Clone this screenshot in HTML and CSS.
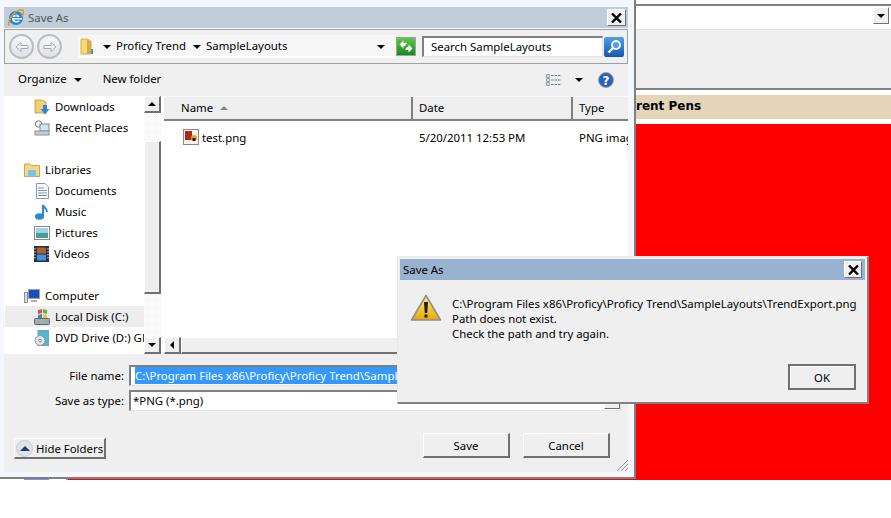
FILE: index.html

```html
<!DOCTYPE html>
<html lang="en">
<head>
  <meta charset="UTF-8">
  <title>Save As</title>
  <link rel="stylesheet" href="styles.css">
</head>
<body>
  <div class="desktop">

    <!-- app behind the dialogs -->
    <div class="app">
      <div class="app-select"><span class="select-btn"><i class="tri"></i></span></div>
      <div class="app-panel"></div>
      <div class="pens-title"><span>rent Pens</span></div>
      <div class="pens-body"></div>
    </div>

    <!-- file dialog -->
    <div class="file-dialog">
      <div class="titlebar file-title">
        <svg class="ie-icon" width="16" height="17" viewBox="0 0 16 17">
          <circle cx="8" cy="9" r="7" fill="#1f86dc"/>
          <path d="M1 16.500 C0 13 2 9 5 5.500 C8 2.500 12.500 0 15 1.200 C16.500 2.500 15.500 5 13.500 7.500" fill="none" stroke="#e8960f" stroke-width="1.600"/>
          <path d="M4.500 8 C5 4.500 11 4.500 11.500 8 Z" fill="#fff"/>
          <path d="M6.300 7.500 C6.800 6 9.300 6 9.700 7.500 Z" fill="#1f86dc"/>
          <rect x="4" y="9" width="10" height="1.500" fill="#fff"/>
          <path d="M4 10.500 C4.500 14 9.500 14.500 12 12 L10 11.500 C8.500 12.500 6.800 12 6.300 10.500 Z" fill="#fff"/>
        </svg>
        <span class="title-text">Save As</span>
        <span class="close-btn">
          <svg width="11" height="10" viewBox="0 0 11 10"><path d="M1 0.500 L10 9.500 M10 0.500 L1 9.500" stroke="#000" stroke-width="2.400"/></svg>
        </span>
      </div>

      <div class="navbar">
        <div class="nav-buttons">
          <span class="round-btn">
            <svg width="14" height="12" viewBox="0 0 14 12"><path d="M1 6 L6 1.500 V4.500 H13 V7.500 H6 V10.500 Z" fill="#f2f3f4" stroke="#a4a8ac"/></svg>
          </span>
          <span class="round-btn">
            <svg width="14" height="12" viewBox="0 0 14 12"><path d="M13 6 L8 1.500 V4.500 H1 V7.500 H8 V10.500 Z" fill="#f2f3f4" stroke="#a4a8ac"/></svg>
          </span>
        </div>
        <div class="address">
          <svg class="addr-folder" width="14" height="17" viewBox="0 0 14 17">
            <path d="M1 1 H7 L11 3 V16 H1 Z" fill="#f6d978" stroke="#c9a63e" stroke-width=".8"/>
            <path d="M7 2 L11 3.500 V16 H7 Z" fill="#dca93c"/>
            <rect x="11" y="11" width="2" height="5" fill="#3f93dc"/>
          </svg>
          <i class="tri addr-tri1"></i>
          <span class="crumb">Proficy Trend</span>
          <i class="tri addr-tri2"></i>
          <span class="crumb">SampleLayouts</span>
          <i class="tri addr-tri3"></i>
        </div>
        <span class="refresh-btn">
          <svg width="14" height="13" viewBox="0 0 14 13">
            <path d="M0.500 4.500 L4.500 0.500 V3 H8 L6 6 H4.500 V8.500 Z M13.500 8.500 L9.500 12.500 V10 H6 L8 7 H9.500 V4.500 Z" fill="#fff"/>
          </svg>
        </span>
        <div class="search-box">Search SampleLayouts</div>
        <span class="search-btn">
          <svg width="15" height="15" viewBox="0 0 15 15">
            <circle cx="9" cy="6" r="4" fill="#5a9fdc" stroke="#fff" stroke-width="1.800"/>
            <path d="M6 9 L1.500 13.500" stroke="#fff" stroke-width="2.400"/>
          </svg>
        </span>
      </div>

      <div class="toolbar">
        <span class="tool-label">Organize</span>
        <i class="tri organize-tri"></i>
        <span class="tool-label">New folder</span>
        <span class="toolbar-right">
          <svg width="16" height="12" viewBox="0 0 16 12">
            <path d="M0.500 0.500 H3.500 V3.500 H0.500 Z M0.500 4.500 H3.500 V7.500 H0.500 Z M0.500 8.500 H3.500 V11.500 H0.500 Z" fill="#fff" stroke="#8fa4bd"/>
            <path d="M1.500 2 H2.500 M1.500 6 H2.500 M1.500 10 H2.500" stroke="#d0452c"/>
            <path d="M5 1.500 H15 M5 6 H15 M5 10.500 H15" stroke="#67788e" stroke-width="1.200" stroke-dasharray="2.500 1"/>
          </svg>
          <i class="tri view-tri"></i>
          <svg class="help-icon" width="16" height="16" viewBox="0 0 16 16">
            <circle cx="8" cy="8" r="7.500" fill="#2f5fb5" stroke="#9aa3ad"/>
            <text x="8" y="12.500" text-anchor="middle" class="help-mark">?</text>
          </svg>
        </span>
      </div>

      <div class="browser">
        <div class="nav-pane">
          <ul class="tree">
            <li class="tree-row sub">
              <svg width="16" height="16" viewBox="0 0 16 16"><path d="M1 1 H8 L12 3 V14 H1 Z" fill="#f0cf6e" stroke="#b8963c" stroke-width=".8"/><path d="M9 6 H13 V10 H15.500 L11 15.500 L6.500 10 H9 Z" fill="#2f86d8"/></svg>
              <span>Downloads</span>
            </li>
            <li class="tree-row sub">
              <svg width="16" height="16" viewBox="0 0 16 16"><circle cx="4.500" cy="4" r="3.200" fill="#f4f4f4" stroke="#777"/><rect x="6" y="4" width="9" height="7" fill="#cfe3f2" stroke="#7d8a96"/><rect x="1" y="11" width="14" height="4" fill="#c8ccd0" stroke="#8d9298"/></svg>
              <span>Recent Places</span>
            </li>
            <li class="tree-row gap"></li>
            <li class="tree-row top">
              <svg width="16" height="15" viewBox="0 0 16 15"><path d="M0.500 2 H6 L7.500 3.500 H15.500 V14.500 H0.500 Z" fill="#f3d888" stroke="#c9a650"/><path d="M4 8 H12 V14.500 H4 Z" fill="#7fc1e6"/></svg>
              <span>Libraries</span>
            </li>
            <li class="tree-row sub">
              <svg width="16" height="16" viewBox="0 0 16 16"><path d="M2.500 0.500 H11 L14.500 4 V15.500 H2.500 Z" fill="#fff" stroke="#8b98a8"/><path d="M4 5 H10 M4 7.500 H13 M4 10 H13 M4 12.500 H13" stroke="#6e8fc2"/></svg>
              <span>Documents</span>
            </li>
            <li class="tree-row sub">
              <svg width="16" height="16" viewBox="0 0 16 16"><ellipse cx="5.500" cy="12.500" rx="4.500" ry="3.300" fill="#2b88d8"/><path d="M9 12 V1 C10 4 13 4 13 8" fill="none" stroke="#2b88d8" stroke-width="2"/></svg>
              <span>Music</span>
            </li>
            <li class="tree-row sub">
              <svg width="16" height="14" viewBox="0 0 16 14"><rect x="0.500" y="0.500" width="15" height="13" fill="#fff" stroke="#7e8a96"/><rect x="2" y="2" width="12" height="5" fill="#9fd0ea"/><rect x="2" y="7" width="12" height="5" fill="#4e9a8e"/></svg>
              <span>Pictures</span>
            </li>
            <li class="tree-row sub">
              <svg width="15" height="16" viewBox="0 0 15 16"><rect width="15" height="16" fill="#26323e"/><rect x="3" y="1.500" width="9" height="6" fill="#b5612f"/><rect x="3" y="8.500" width="9" height="6" fill="#3f93dc"/><path d="M1 2 V14 M14 2 V14" stroke="#d8dde2" stroke-dasharray="1.500 1.500"/></svg>
              <span>Videos</span>
            </li>
            <li class="tree-row gap"></li>
            <li class="tree-row top">
              <svg width="16" height="14" viewBox="0 0 16 14"><rect x="4.500" y="0.500" width="11" height="9" fill="#1e4fb8" stroke="#9aa4ae"/><rect x="0.500" y="3.500" width="3" height="10" fill="#d8dcdf" stroke="#8b9096"/><rect x="7" y="11" width="6" height="2" fill="#a9afb5"/></svg>
              <span>Computer</span>
            </li>
            <li class="tree-row sub selected">
              <svg width="16" height="16" viewBox="0 0 16 16"><path d="M4 1 L8 0 V4 L4 5 Z" fill="#e2502a"/><path d="M9 0 L13 1 V5 L9 4 Z" fill="#62b24a"/><path d="M4 6 L8 5 V9 H4 Z" fill="#2f86d8"/><path d="M9 5 L13 6 V9 H9 Z" fill="#f2c030"/><rect x="0.500" y="9.500" width="15" height="6" rx="1" fill="#a4abb2" stroke="#5c646c"/><rect x="11" y="12" width="3" height="1" fill="#5fd04a"/></svg>
              <span>Local Disk (C:)</span>
            </li>
            <li class="tree-row sub">
              <svg width="16" height="16" viewBox="0 0 16 16"><rect x="4" y="0.500" width="10.500" height="15" fill="#4fb8cf" stroke="#6ca8b8"/><circle cx="6" cy="10.500" r="5" fill="#dfe3e8" stroke="#8d949c"/><circle cx="6" cy="10.500" r="1.300" fill="#fff" stroke="#8d949c"/></svg>
              <span>DVD Drive (D:) GF</span>
            </li>
          </ul>
        </div>

        <div class="v-scroll">
          <span class="scroll-btn"><i class="tri-up"></i></span>
          <span class="scroll-track small"></span>
          <span class="scroll-thumb"></span>
          <span class="scroll-track"></span>
          <span class="scroll-btn"><i class="tri"></i></span>
        </div>

        <div class="file-pane">
          <div class="col-heads">
            <div class="col col-name">Name <i class="sort-arrow"></i></div>
            <div class="col col-date">Date</div>
            <div class="col col-type">Type</div>
          </div>
          <div class="file-rows">
            <div class="file-row">
              <div class="col-name file-name">
                <svg width="16" height="16" viewBox="0 0 16 16"><rect x="0.500" y="0.500" width="15" height="15" fill="#f4f4f4" stroke="#8a8a8a"/><rect x="2" y="2" width="7" height="9" fill="#b02a18"/><circle cx="11" cy="9" r="3" fill="#e8a020"/><rect x="9.500" y="9" width="3" height="3" fill="#2a1a10"/></svg>
                <span>test.png</span>
              </div>
              <div class="col-date">5/20/2011 12:53 PM</div>
              <div class="col-type">PNG imag</div>
            </div>
          </div>
          <div class="h-scroll">
            <span class="scroll-btn"><i class="tri-left"></i></span>
            <span class="h-thumb"></span>
          </div>
        </div>
      </div>

      <div class="form">
        <div class="form-row name-row">
          <label>File name:</label>
          <div class="field"><span class="picked">C:\Program Files x86\Proficy\Proficy Trend\SampleLayouts\TrendExport.png</span></div>
        </div>
        <div class="form-row type-row">
          <label>Save as type:</label>
          <div class="field type-field">*PNG (*.png)<span class="select-btn"><i class="tri"></i></span></div>
        </div>
      </div>

      <div class="footer">
        <span class="hide-btn">
          <span class="hide-dot"><i class="tri-up navy"></i></span>
          <span>Hide Folders</span>
        </span>
        <span class="footer-actions">
          <span class="btn">Save</span>
          <span class="btn">Cancel</span>
        </span>
        <svg class="grip" width="11" height="11" viewBox="0 0 11 11">
          <path d="M0 11 L11 0 M4 11 L11 4 M8 11 L11 8" stroke="#9a9a9a"/>
        </svg>
      </div>
    </div>

    <!-- error box -->
    <div class="alert">
      <div class="titlebar alert-title">
        <span class="title-text">Save As</span>
        <span class="close-btn">
          <svg width="11" height="10" viewBox="0 0 11 10"><path d="M1 0.500 L10 9.500 M10 0.500 L1 9.500" stroke="#000" stroke-width="2.400"/></svg>
        </span>
      </div>
      <div class="alert-body">
        <svg class="warn-icon" width="32" height="28" viewBox="0 0 32 28">
          <defs>
            <linearGradient id="warnFill" x1="0" y1="0" x2="0" y2="1">
              <stop offset="0" stop-color="#fff27a"/>
              <stop offset="1" stop-color="#e8a800"/>
            </linearGradient>
          </defs>
          <path d="M16 1.500 L30.500 26 H1.500 Z" fill="url(#warnFill)" stroke="#8c8f94" stroke-width="1.600" stroke-linejoin="round"/>
          <path d="M14 8 H18 L17.200 19 H14.800 Z" fill="#1a1a1a"/>
          <rect x="14.500" y="20.500" width="3" height="3" fill="#1a1a1a"/>
        </svg>
        <div class="alert-msg">
          <p>C:\Program Files x86\Proficy\Proficy Trend\SampleLayouts\TrendExport.png</p>
          <p>Path does not exist.</p>
          <p>Check the path and try again.</p>
        </div>
      </div>
      <div class="alert-foot"><span class="btn ok-btn">OK</span></div>
    </div>

    <div class="bottom-scrap"></div>
  </div>
</body>
</html>
```

FILE: styles.css

```css
* {
  box-sizing: border-box;
}
html, body {
  margin: 0;
  padding: 0;
  background: #fff;
}
body {
  font-family: "Noto Sans", sans-serif;
  font-size: 11.4px;
  color: #000;
}
ul {
  list-style: none;
  margin: 0;
  padding: 0;
}
svg {
  display: block;
  flex: none;
}
.desktop {
  position: relative;
  width: 891px;
  height: 518px;
  overflow: hidden;
  background: #fff;
}

/* little triangles */
.tri {
  display: block;
  width: 0;
  height: 0;
  border-left: 4px solid transparent;
  border-right: 4px solid transparent;
  border-top: 4px solid #000;
}
.tri-up {
  display: block;
  width: 0;
  height: 0;
  border-left: 4px solid transparent;
  border-right: 4px solid transparent;
  border-bottom: 4px solid #000;
}
.tri-up.navy {
  border-bottom-color: #1f3a78;
  border-left-width: 5px;
  border-right-width: 5px;
  border-bottom-width: 5px;
}
.tri-left {
  display: block;
  width: 0;
  height: 0;
  border-top: 4px solid transparent;
  border-bottom: 4px solid transparent;
  border-right: 4px solid #000;
}

/* app behind */
.app {
  position: absolute;
  left: 635px;
  top: 0;
  width: 256px;
  height: 480px;
  display: flex;
  flex-direction: column;
  background: #fff;
}
.app-select {
  height: 26px;
  margin-top: 4px;
  border-top: 2px solid #808080;
  border-bottom: 1px solid #e3e3e3;
  background: #fff;
  display: flex;
  justify-content: flex-end;
  padding: 1px 2px 0 0;
}
.select-btn {
  width: 16px;
  height: 17px;
  background: #efefef;
  border: 1px solid #fff;
  border-right-color: #707070;
  border-bottom-color: #707070;
  display: flex;
  align-items: center;
  justify-content: center;
}
.app-panel {
  height: 60px;
  background: #efefef;
  border-bottom: 2px solid #808080;
}
.pens-title {
  height: 24px;
  margin-top: 5px;
  padding-left: 1px;
  background: #e3d4ba;
  font-family: "DejaVu Sans", sans-serif;
  font-weight: bold;
  font-size: 12px;
  line-height: 23px;
}
.pens-body {
  flex: 1;
  margin-top: 5px;
  background: #f00;
}

/* windows */
.titlebar {
  display: flex;
  align-items: center;
}
.title-text {
  flex: 1;
}
.close-btn {
  width: 19px;
  height: 17px;
  background: #efefef;
  border: 1px solid #fff;
  border-right-color: #707070;
  border-bottom-color: #707070;
  display: flex;
  align-items: center;
  justify-content: center;
}

.file-dialog {
  position: absolute;
  left: 0;
  top: 0;
  width: 636px;
  height: 479px;
  padding: 7px 6px 5px 4px;
  background: #f4f7fd;
  border-right: 2px solid #808080;
  border-bottom: 2px solid #808080;
  display: flex;
  flex-direction: column;
}
.file-title {
  height: 21px;
  flex: none;
  background: #bfcddb;
  padding: 0 2px 0 4px;
  gap: 4px;
  color: #555;
}

.navbar {
  height: 35px;
  flex: none;
  margin-top: 1px;
  border: 1px solid #a0a0a0;
  background: #f0f0f0;
  display: flex;
  align-items: center;
  padding-left: 4px;
}
.nav-buttons {
  display: flex;
  gap: 3px;
  width: 69px;
}
.round-btn {
  width: 25px;
  height: 25px;
  border-radius: 50%;
  border: 2px solid #b9bcc0;
  background: linear-gradient(#f6f7f8, #dfe1e3);
  display: flex;
  align-items: center;
  justify-content: center;
}
.address {
  width: 317px;
  height: 23px;
  background: linear-gradient(#f7f7f7, #f7f7f7 21px, #fff 21px);
  display: flex;
  align-items: center;
}
.crumb {
  margin-top: -2px;
}
.addr-folder {
  margin-left: 2px;
}
.addr-tri1 {
  margin-left: 9px;
  margin-right: 5px;
}
.addr-tri2 {
  margin-left: 7px;
  margin-right: 5px;
}
.addr-tri3 {
  margin-left: auto;
  margin-right: 10px;
}
.refresh-btn {
  width: 20px;
  height: 19px;
  margin-left: 1px;
  background: linear-gradient(#5fc84a, #1a8a1e);
  border: 1px solid #9aa4a0;
  display: flex;
  align-items: center;
  justify-content: center;
}
.search-box {
  width: 181px;
  height: 21px;
  margin-left: 6px;
  background: #fff;
  border: 1px solid #e3e3e3;
  border-top: 2px solid #808080;
  border-left: 2px solid #808080;
  padding-left: 7px;
  line-height: 17px;
}
.search-btn {
  width: 20px;
  height: 20px;
  margin-left: 1px;
  border-radius: 2px;
  background: linear-gradient(#4f9fe6, #1458b0);
  display: flex;
  align-items: center;
  justify-content: center;
}

.toolbar {
  height: 32px;
  flex: none;
  background: #f0f0f0;
  display: flex;
  align-items: center;
  padding: 0 14px 0 14px;
}
.tool-label {
  margin-top: -3px;
}
.organize-tri {
  margin: -1px 21px 0 7px;
}
.toolbar-right {
  margin-left: auto;
  display: flex;
  align-items: center;
}
.view-tri {
  margin: 0 15px 0 13px;
}
.help-mark {
  font-family: "DejaVu Sans", sans-serif;
  font-size: 12px;
  font-weight: bold;
  fill: #fff;
}

.browser {
  height: 258px;
  flex: none;
  display: flex;
  background: #fff;
}
.nav-pane {
  width: 140px;
  overflow: hidden;
}
.tree-row {
  height: 21px;
  display: flex;
  align-items: center;
  white-space: nowrap;
}
.tree-row.top {
  padding-left: 20px;
  gap: 5px;
}
.tree-row.sub {
  padding-left: 30px;
  gap: 5px;
}
.tree-row.selected {
  background: #ededed;
  margin-left: 1px;
  padding-left: 29px;
}

.v-scroll {
  width: 17px;
  flex: none;
  display: flex;
  flex-direction: column;
  background: #f4f4f4;
}
.scroll-btn {
  flex: none;
  width: 17px;
  height: 17px;
  background: #efefef;
  border: 1px solid #fff;
  border-right: 2px solid #707070;
  border-bottom: 2px solid #707070;
  display: flex;
  align-items: center;
  justify-content: center;
}
.scroll-track {
  flex: 1;
  background: repeating-conic-gradient(#f4f4f4 0 25%, #fff 0 50%) 0 0 / 2px 2px;
}
.scroll-track.small {
  flex: none;
  height: 28px;
}
.scroll-thumb {
  flex: none;
  height: 153px;
  background: #efefef;
  border: 1px solid #fff;
  border-right: 2px solid #707070;
  border-bottom: 2px solid #707070;
}

.file-pane {
  flex: 1;
  min-width: 0;
  margin-left: 3px;
  display: flex;
  flex-direction: column;
  overflow: hidden;
}
.col-heads {
  height: 25px;
  flex: none;
  display: flex;
  background: #efefef;
  border-bottom: 2px solid #808080;
  border-top: 1px solid #f8f8f8;
  line-height: 22px;
}
.col {
  border-right: 2px solid #808080;
  padding-left: 17px;
  display: flex;
  align-items: center;
  gap: 7px;
}
.col-name {
  width: 249px;
  flex: none;
}
.col-date {
  width: 160px;
  flex: none;
  padding-left: 6px;
}
.col-type {
  flex: 1;
  padding-left: 6px;
  border-right: 0;
  white-space: nowrap;
}
.sort-arrow {
  display: block;
  width: 0;
  height: 0;
  border-left: 4px solid transparent;
  border-right: 4px solid transparent;
  border-bottom: 4px solid #888;
}
.file-rows {
  flex: 1;
}
.file-row {
  display: flex;
  align-items: center;
  height: 22px;
  margin-top: 5px;
}
.file-name {
  display: flex;
  align-items: center;
  gap: 3px;
  padding-left: 19px;
}
.file-row .col-date {
  padding-left: 6px;
}
.h-scroll {
  height: 17px;
  flex: none;
  display: flex;
  background: repeating-conic-gradient(#f4f4f4 0 25%, #fff 0 50%) 0 0 / 2px 2px;
}
.h-thumb {
  width: 300px;
  height: 17px;
  background: #efefef;
  border: 1px solid #fff;
  border-right: 2px solid #707070;
  border-bottom: 2px solid #707070;
}

.form {
  flex: none;
  background: #efefef;
  padding-top: 11px;
}
.form-row {
  display: flex;
  align-items: center;
}
.form-row label {
  width: 120px;
  text-align: right;
  margin-right: 5px;
}
.name-row {
  height: 21px;
  margin-bottom: 4px;
}
.type-row {
  height: 21px;
}
.field {
  width: 492px;
  height: 21px;
  background: #fff;
  border: 1px solid #e3e3e3;
  border-top: 2px solid #808080;
  border-left: 2px solid #808080;
  padding-left: 2px;
  line-height: 17px;
  white-space: nowrap;
  overflow: hidden;
}
.picked {
  background: #3399ff;
  color: #fff;
  margin-left: 2px;
  display: inline-block;
}
.type-field {
  display: flex;
  justify-content: space-between;
}

.footer {
  flex: 1;
  background: #efefef;
  position: relative;
  display: flex;
  align-items: flex-start;
  padding: 22px 18px 0 10px;
}
.hide-btn {
  margin-top: 5px;
  width: 92px;
  height: 21px;
  background: #efefef;
  border: 1px solid #fff;
  border-right: 2px solid #707070;
  border-bottom: 2px solid #707070;
  display: flex;
  align-items: center;
  gap: 3px;
  padding-left: 1px;
  white-space: nowrap;
}
.hide-dot {
  width: 17px;
  height: 17px;
  flex: none;
  border-radius: 50%;
  background: #dfe3e6;
  border: 1px solid #c5cbe0;
  display: flex;
  align-items: center;
  justify-content: center;
}
.footer-actions {
  margin-left: auto;
  display: flex;
  gap: 13px;
}
.btn {
  width: 87px;
  height: 25px;
  background: #efefef;
  border: 1px solid #fff;
  border-right: 2px solid #707070;
  border-bottom: 2px solid #707070;
  display: flex;
  align-items: center;
  justify-content: center;
}
.grip {
  position: absolute;
  right: 0;
  bottom: 1px;
}

/* error box */
.alert {
  position: absolute;
  left: 397px;
  top: 256px;
  width: 472px;
  height: 148px;
  background: #efefef;
  border: 1px solid #e8e8e8;
  border-right: 2px solid #808080;
  border-bottom: 2px solid #808080;
  padding: 2px 2px 0 2px;
  display: flex;
  flex-direction: column;
}
.alert-title {
  height: 21px;
  flex: none;
  background: #98b2cf;
  padding: 0 3px 0 3px;
}
.alert-title .close-btn {
  width: 18px;
}
.alert-body {
  flex: 1;
  display: flex;
  padding: 14px 0 0 10px;
}
.warn-icon {
  margin-right: 10px;
}
.alert-msg {
  padding-top: 2px;
}
.alert-msg p {
  margin: 0;
  height: 15px;
  line-height: 15px;
  white-space: nowrap;
}
.alert-foot {
  display: flex;
  justify-content: flex-end;
  padding: 0 9px 12px 0;
}
.ok-btn {
  width: 68px;
  height: 26px;
  border: 2px solid #707070;
  box-shadow: inset 1px 1px 0 #fff;
}

.bottom-scrap {
  position: absolute;
  left: 24px;
  top: 479px;
  width: 611px;
  height: 1px;
  background: linear-gradient(to right, #8a8aff 25px, #fff 25px, #fff 42px, #8a8aff 42px, #8a8aff 44px, #f00 44px);
}
```
